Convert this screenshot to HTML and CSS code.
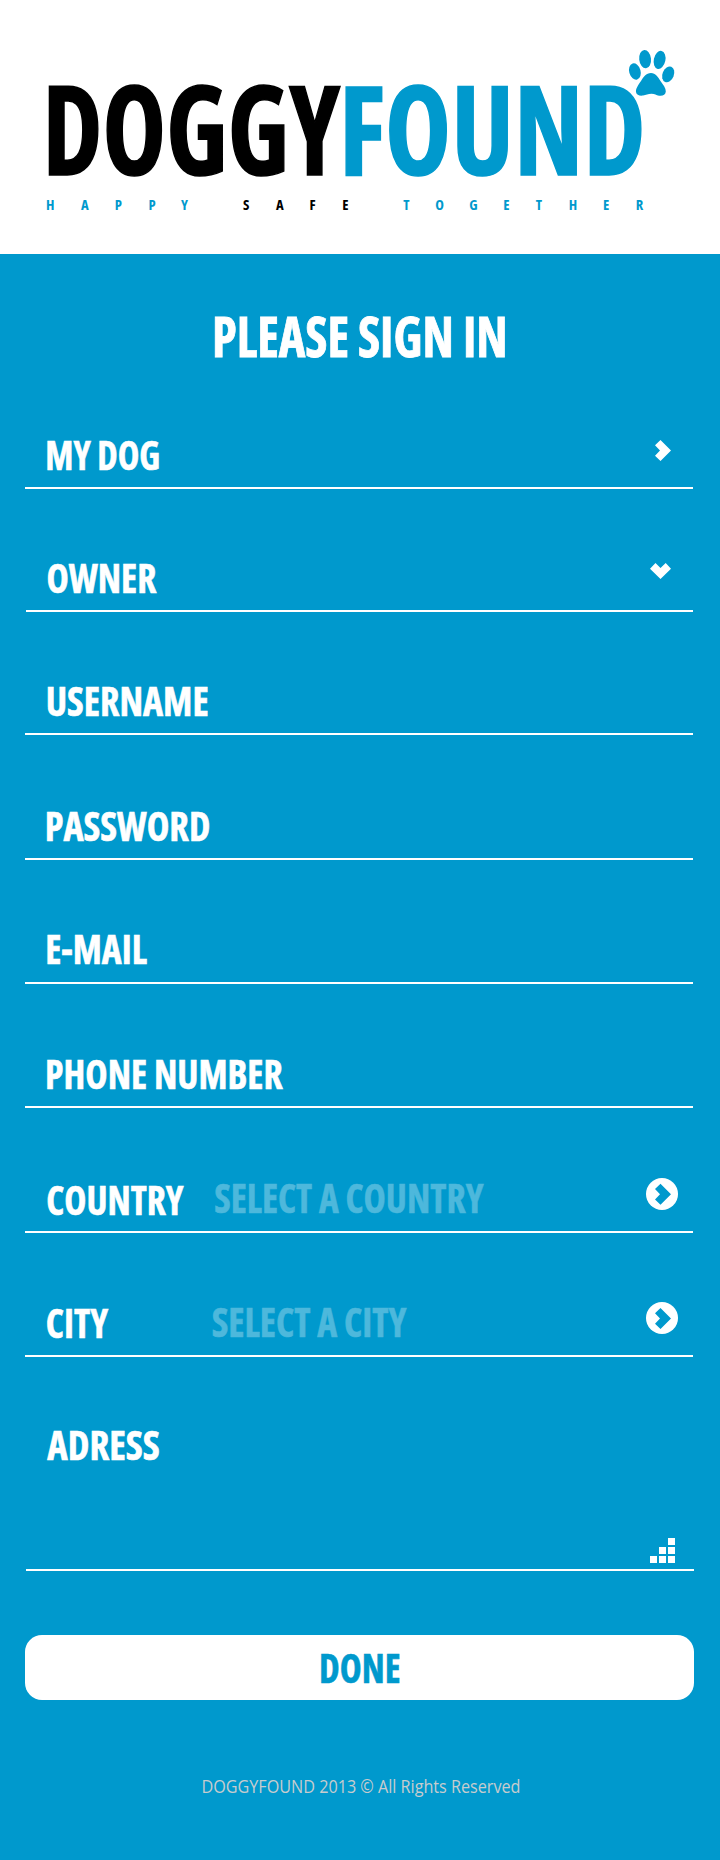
FILE: index.html
```html
<!DOCTYPE html>
<html lang="en">
<head>
<meta charset="utf-8">
<title>DoggyFound – Sign in</title>
<link rel="stylesheet" href="styles.css">
</head>
<body>
<header class="header">
  <svg class="brand" viewBox="0 0 720 254" width="720" height="254">
    <text class="logo logo-dark" x="42.6" y="175.1" textLength="297.6" lengthAdjust="spacingAndGlyphs">DOGGY</text>
    <text class="logo logo-blue" x="338.9" y="175.1" textLength="306.8" lengthAdjust="spacingAndGlyphs">FOUND</text>
    <g class="paw">
      <ellipse cx="634.9" cy="71.5" rx="5.7" ry="8.3" transform="rotate(-16 634.9 71.5)"/>
      <ellipse cx="645.1" cy="59.1" rx="5.9" ry="9.2" transform="rotate(-6 645.1 59.1)"/>
      <ellipse cx="659.6" cy="59.9" rx="5.8" ry="9.2" transform="rotate(12 659.6 59.9)"/>
      <ellipse cx="668.2" cy="74.3" rx="5.7" ry="8.2" transform="rotate(22 668.2 74.3)"/>
      <path d="M651 73C646 73 643.5 77 641 81C638 85 635.6 89 636 92C636.4 95.2 640 96 643 95.5C646 95 648 93.7 651.5 93.7C655 93.7 656 95 659 95.7C662.5 96.3 665.5 95 665.8 91.5C666 88 663 84.5 660.5 81C658 77 655.5 73 651 73Z"/>
    </g>
    <text class="tag tag-blue" y="210.3" x="46 81 114.8 148.4 181">HAPPY</text>
    <text class="tag tag-dark" y="210.3" x="243 276 309.6 342.3">SAFE</text>
    <text class="tag tag-blue" y="210.3" x="403.3 435.3 469.2 503.3 535.7 568.7 603 635.7">TOGETHER</text>
  </svg>
</header>
<main class="form">
  <svg class="heading" width="720" height="146"><text class="title" x="211.9" y="103.4" textLength="295.9" lengthAdjust="spacingAndGlyphs">PLEASE SIGN IN</text></svg>

  <div class="field field-first">
    <svg class="name"><text class="label" x="20.3" y="43.4" textLength="115" lengthAdjust="spacingAndGlyphs">MY DOG</text></svg>
    <svg class="icon"><path d="M17.5 13L28 23.5L17.5 34L12 28.7L17 23.5L12 18.2Z"/></svg>
  </div>
  <div class="field field-inset">
    <svg class="name"><text class="label" x="21.4" y="43.4" textLength="110" lengthAdjust="spacingAndGlyphs">OWNER</text></svg>
    <svg class="icon"><path d="M7 18.7L12.5 13L17.5 18L22.7 13L28 18.7L17.5 29Z"/></svg>
  </div>
  <div class="field">
    <svg class="name"><text class="label" x="20.7" y="43.4" textLength="163" lengthAdjust="spacingAndGlyphs">USERNAME</text></svg>
  </div>
  <div class="field field-tall">
    <svg class="name"><text class="label" x="19.7" y="43.4" textLength="165.6" lengthAdjust="spacingAndGlyphs">PASSWORD</text></svg>
  </div>
  <div class="field field-mid">
    <svg class="name"><text class="label" x="20.2" y="42.3" textLength="101.8" lengthAdjust="spacingAndGlyphs">E-MAIL</text></svg>
  </div>
  <div class="field field-mid">
    <svg class="name"><text class="label" x="20.1" y="42.6" textLength="237.6" lengthAdjust="spacingAndGlyphs">PHONE NUMBER</text></svg>
  </div>
  <div class="field field-tall">
    <svg class="name"><text class="label" x="21.3" y="43.5" textLength="137.2" lengthAdjust="spacingAndGlyphs">COUNTRY</text></svg>
    <svg class="choice"><text class="label hint" x="14.2" y="41.5" textLength="269.3" lengthAdjust="spacingAndGlyphs">SELECT A COUNTRY</text></svg>
    <svg class="icon"><circle cx="19" cy="23" r="16"/><path class="cut" d="M17.5 12.7L28 23.2L17.5 33.7L12 28.4L17 23.2L12 17.9Z"/></svg>
  </div>
  <div class="field field-mid">
    <svg class="name"><text class="label" x="20.8" y="43.4" textLength="62.2" lengthAdjust="spacingAndGlyphs">CITY</text></svg>
    <svg class="choice"><text class="label hint" x="11.7" y="41.5" textLength="194.8" lengthAdjust="spacingAndGlyphs">SELECT A CITY</text></svg>
    <svg class="icon"><circle cx="19" cy="23" r="16"/><path class="cut" d="M17.5 13L28 23.5L17.5 34L12 28.7L17 23.5L12 18.2Z"/></svg>
  </div>
  <div class="field field-area">
    <svg class="name"><text class="label" x="22.3" y="43.4" textLength="112.5" lengthAdjust="spacingAndGlyphs">ADRESS</text></svg>
    <svg class="icon"><path d="M24 29h7v7h-7zM15 38h7v7h-7zM24 38h7v7h-7zM6 47h7v7h-7zM15 47h7v7h-7zM24 47h7v7h-7z"/></svg>
  </div>

  <button class="done" type="button" aria-label="Done">
    <svg width="668" height="65"><text class="label label-done" x="294.1" y="47.8" textLength="81.4" lengthAdjust="spacingAndGlyphs">DONE</text></svg>
  </button>
</main>
<footer class="footer">
  <svg width="720" height="160"><text class="legal" x="201.5" y="92.8" textLength="319" lengthAdjust="spacingAndGlyphs">DOGGYFOUND 2013 © All Rights Reserved</text></svg>
</footer>
</body>
</html>
```

FILE: styles.css
```css
body {
  margin: 0;
  background: #0099cd;
  font-family: "Open Sans", "Noto Sans", sans-serif;
}
svg {
  display: block;
  overflow: visible;
}
.header {
  height: 254px;
  background: #fff;
}
.logo,
.tag,
.title,
.label {
  font-family: "Open Sans", "Noto Sans", sans-serif;
  font-weight: 700;
  font-stretch: 75%;
}
.logo { font-size: 124.5px; stroke-width: 1.5px; }
.tag { font-size: 14.6px; }
.logo-dark { fill: #000; stroke: #000; }
.logo-blue { fill: #0099cd; stroke: #0099cd; }
.tag-dark { fill: #000; }
.tag-blue, .paw { fill: #0099cd; }
.title {
  font-size: 56px;
  fill: #fff;
  stroke: #fff;
  stroke-width: 0.8px;
}
.label {
  font-size: 41.8px;
  fill: #fff;
  stroke: #fff;
  stroke-width: 0.6px;
}
.hint { fill: #4db8dc; stroke: #4db8dc; }
.label-done { fill: #0099cd; stroke: #0099cd; }
.field {
  box-sizing: border-box;
  width: 668px;
  height: 123px;
  margin-left: 25px;
  border-bottom: 2px solid #fff;
  display: flex;
  align-items: flex-end;
}
.field-first { height: 89px; }
.field-inset { width: 667px; margin-left: 26px; }
.field-mid { height: 124px; }
.field-tall { height: 125px; }
.field-area {
  height: 214px;
  margin-left: 26px;
}
.name { width: 175px; height: 60px; }
.field-inset .name,
.field-area .name { margin-left: -1px; }
.field-area .name {
  align-self: flex-start;
  margin-top: 60px;
}
.choice { width: 300px; height: 60px; }
.icon {
  width: 50px;
  height: 60px;
  margin-left: auto;
  fill: #fff;
}
.cut { fill: #0099cd; }
.done {
  display: flex;
  align-items: flex-start;
  width: 668.5px;
  height: 65.3px;
  margin: 63.7px 0 0 25px;
  padding: 0;
  border: 0;
  border-radius: 17px;
  background: #fff;
}
.footer { height: 160px; }
.legal {
  font-size: 18px;
  fill: #c8ccce;
}
```
